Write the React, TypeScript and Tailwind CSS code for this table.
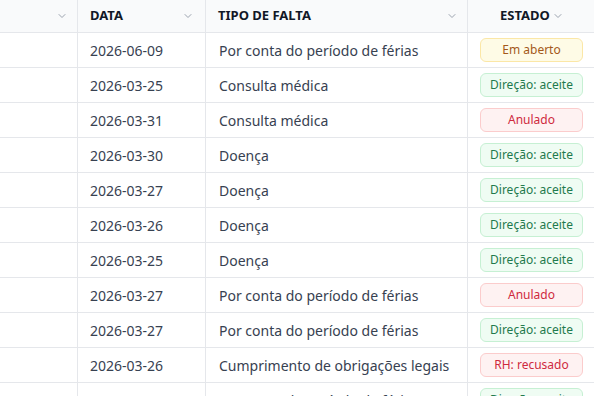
import { ChevronDown } from 'lucide-react';

type Status = 'aberto' | 'aceite' | 'anulado' | 'recusado';

interface Row {
  name: string;
  date: string;
  type: string;
  status: Status;
}

const rows: Row[] = [
  { name: '', date: '2026-06-09', type: 'Por conta do período de férias', status: 'aberto' },
  { name: '', date: '2026-03-25', type: 'Consulta médica', status: 'aceite' },
  { name: '', date: '2026-03-31', type: 'Consulta médica', status: 'anulado' },
  { name: '', date: '2026-03-30', type: 'Doença', status: 'aceite' },
  { name: '', date: '2026-03-27', type: 'Doença', status: 'aceite' },
  { name: '', date: '2026-03-26', type: 'Doença', status: 'aceite' },
  { name: '', date: '2026-03-25', type: 'Doença', status: 'aceite' },
  { name: '', date: '2026-03-27', type: 'Por conta do período de férias', status: 'anulado' },
  { name: '', date: '2026-03-27', type: 'Por conta do período de férias', status: 'aceite' },
  { name: '', date: '2026-03-26', type: 'Cumprimento de obrigações legais', status: 'recusado' },
  { name: 'Fabio', date: '2026-03-26', type: 'Por conta do período de férias', status: 'aceite' }
];

const badge: Record<Status, { label: string; cls: string }> = {
  aberto: { label: 'Em aberto', cls: 'border-[#fbe7a6] bg-[#fefbe6] text-[#a3591a]' },
  aceite: { label: 'Direção: aceite', cls: 'border-[#c6f0d3] bg-[#effcf3] text-[#1f7a4d]' },
  anulado: { label: 'Anulado', cls: 'border-[#fbcccc] bg-[#fef2f2] text-[#cf2a3e]' },
  recusado: { label: 'RH: recusado', cls: 'border-[#fbcccc] bg-[#fef2f2] text-[#cf2a3e]' }
};

const cols = 'grid grid-cols-[78px_128px_262px_128px]';

export default function App() {
  return (
    <div className="h-[396px] w-[594px] overflow-hidden bg-white font-['Noto_Sans',sans-serif] text-[14px] text-[#374151]">
      <div className="w-[596px]">
        <div className={`${cols} h-[33px] border-b border-[#e5e7eb] bg-[#f9fafb] text-[13px] font-bold uppercase text-[#111827]`}>
          <div className="flex items-center justify-end border-r border-[#e5e7eb] pr-[9px]">
            <ChevronDown className="h-3 w-3 text-[#9ca3af]" strokeWidth={2} />
          </div>
          <div className="flex items-center justify-between border-r border-[#e5e7eb] pl-3 pr-[11px]">
            <span>Data</span>
            <ChevronDown className="h-3 w-3 text-[#9ca3af]" strokeWidth={2} />
          </div>
          <div className="flex items-center justify-between border-r border-[#e5e7eb] pl-3 pr-[9px]">
            <span>Tipo de falta</span>
            <ChevronDown className="h-3 w-3 text-[#9ca3af]" strokeWidth={2} />
          </div>
          <div className="flex items-center justify-center gap-[2px]">
            <span>Estado</span>
            <ChevronDown className="h-3 w-3 text-[#9ca3af]" strokeWidth={2} />
          </div>
        </div>
        {rows.map((r, i) => (
          <div key={i} className={`${cols} h-[35px] border-b border-[#e5e7eb]`}>
            <div className="flex items-center overflow-hidden border-r border-[#e5e7eb] pl-2 pt-5 text-[#111827]">
              {r.name}
            </div>
            <div className="flex items-center border-r border-[#e5e7eb] pl-3">{r.date}</div>
            <div className="flex items-center whitespace-nowrap border-r border-[#e5e7eb] pl-[13px]">{r.type}</div>
            <div className="flex items-center pl-3">
              <span
                className={`flex h-6 w-[103px] items-center justify-center rounded-md border text-[12px] ${badge[r.status].cls}`}
              >
                {badge[r.status].label}
              </span>
            </div>
          </div>
        ))}
      </div>
    </div>
  );
}
